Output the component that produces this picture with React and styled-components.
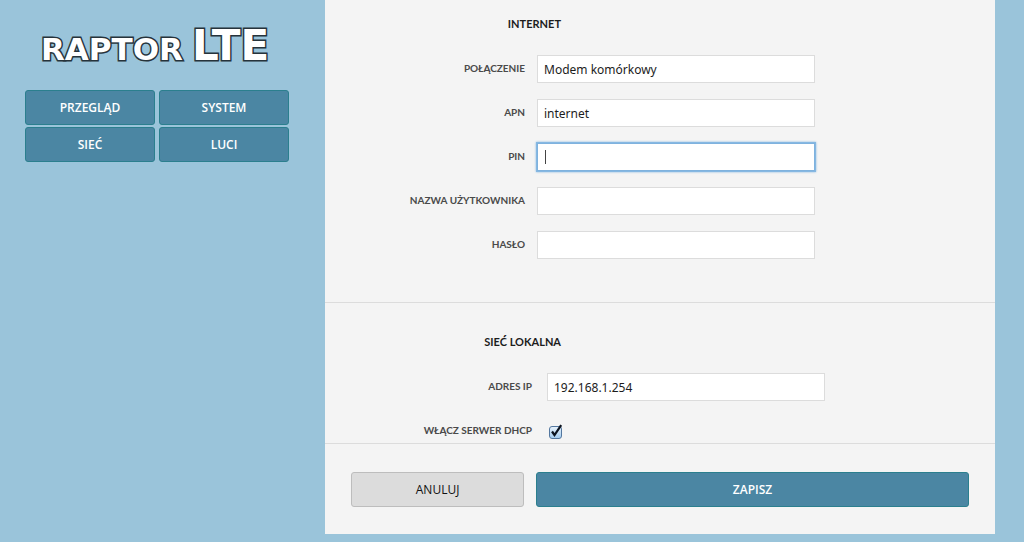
import React, { useState } from "react"
import styled, { createGlobalStyle, css } from "styled-components"

const Colors = {
  sky: "#9ac4da",
  teal: "#4b86a3",
  tealBorder: "#2b7f8e",
  panel: "#f4f4f4",
  line: "#dcdcdc",
  label: "#4a4a4a",
  ink: "#1c1c1c",
}

const GlobalStyle = createGlobalStyle`
  * {
    box-sizing: border-box;
  }

  body {
    margin: 0;
    background: ${Colors.sky};
    color: ${Colors.ink};
    font-family: Lato, "Noto Sans", sans-serif;
  }
`

const Page = styled.div`
  display: grid;
  grid-template-columns: 325px 1fr;
  padding-right: 29px;
`

const Sidebar = styled.aside`
  padding: 20px 36px 0 25px;
`

const Logo = styled.h1`
  display: flex;
  align-items: baseline;
  gap: 9px;
  height: 50px;
  margin: 0 0 20px;
  padding-left: 16px;
  color: #fff;
  font-family: "DejaVu Sans", sans-serif;
  font-size: 31px;
  font-weight: 700;
  line-height: 52px;
  white-space: nowrap;
  paint-order: stroke fill;
  -webkit-text-stroke: 3px #26333b;
`

const LogoLarge = styled.span`
  font-size: 42px;
`

const Nav = styled.nav`
  display: grid;
  grid-template-columns: 1fr 1fr;
  gap: 2px 4px;
`

const Button = styled.button`
  height: 35px;
  padding: 0 10px;
  border: 1px solid ${Colors.tealBorder};
  border-radius: 3px;
  background: ${Colors.teal};
  color: #fff;
  font-family: "Open Sans", "Noto Sans", sans-serif;
  font-size: 12px;
  font-weight: 600;
  cursor: pointer;

  ${props =>
    props.$plain &&
    css`
      border-color: #bdbdbd;
      background: #dcdcdc;
      color: #111;
      font-weight: 400;
    `}
`

const Panel = styled.form`
  background: ${Colors.panel};
`

const Section = styled.section`
  display: flex;
  flex-direction: column;
  gap: 16px;
  padding: ${props => props.$padding};
  border-bottom: 1px solid ${Colors.line};
`

const SectionTitle = styled.h2`
  width: 236px;
  margin: 0 0 6px;
  font-size: 11px;
  font-weight: 700;
  line-height: 18px;
  text-align: right;
`

const Row = styled.div`
  display: grid;
  grid-template-columns: ${props => props.$labelWidth}px minmax(0, 278px);
  column-gap: ${props => props.$gap}px;
`

const Label = styled.label`
  color: ${Colors.label};
  font-size: 10px;
  font-weight: 700;
  line-height: 26px;
  text-align: right;
  white-space: nowrap;
`

const Input = styled.input`
  width: 100%;
  height: 28px;
  padding: 0 6px;
  border: 1px solid ${Colors.line};
  border-radius: 0;
  background: #fff;
  color: ${Colors.ink};
  font-family: "Noto Sans", sans-serif;
  font-size: 12px;

  &:focus {
    outline: none;
    border-color: #7fb2de;
    box-shadow: 0 0 0 1px #86b8e2, 0 0 2px 1px #86b8e2;
  }

  /* steady caret while the field is empty */
  &:focus:placeholder-shown {
    caret-color: transparent;
    background: linear-gradient(#444, #444) 7px center / 1px 14px no-repeat #fff;
  }
`

const CheckWrap = styled.span`
  position: relative;
  width: 14px;
  height: 14px;
  margin: 9px 0 0 2px;
`

const CheckInput = styled.input`
  appearance: none;
  display: block;
  width: 13px;
  height: 13px;
  margin: 0;
  border: 1px solid #53779f;
  border-radius: 3px;
  background: linear-gradient(#e6f1fb, #a5cdf0);
`

const CheckMark = styled.svg`
  position: absolute;
  top: -2px;
  left: 0;
  pointer-events: none;
`

const Actions = styled.div`
  display: grid;
  grid-template-columns: 2fr 5fr;
  gap: 12px;
  padding: 28px 26px 27px;
`

const Field = ({ id, label, value = "", type = "text", labelWidth = 200, gap = 12, autoFocus }) => (
  <Row $labelWidth={labelWidth} $gap={gap}>
    <Label htmlFor={id}>{label}</Label>
    <Input id={id} type={type} defaultValue={value} placeholder=" " autoFocus={autoFocus} />
  </Row>
)

const Checkbox = ({ id }) => {
  const [checked, setChecked] = useState(true)
  return (
    <CheckWrap>
      <CheckInput id={id} type="checkbox" checked={checked} onChange={e => setChecked(e.target.checked)} />
      {checked && (
        <CheckMark width="14" height="15" viewBox="0 0 14 15" aria-hidden="true">
          <path d="M3 7.5 L5.5 11 L12.2 1.2" fill="none" stroke="#0c1420" strokeWidth="2.2" />
        </CheckMark>
      )}
    </CheckWrap>
  )
}

const App = () => {
  return (
    <>
      <GlobalStyle />
      <Page>
        <Sidebar>
          <Logo>
            <span>RAPTOR</span>
            <LogoLarge>LTE</LogoLarge>
          </Logo>
          <Nav>
            <Button type="button">PRZEGLĄD</Button>
            <Button type="button">SYSTEM</Button>
            <Button type="button">SIEĆ</Button>
            <Button type="button">LUCI</Button>
          </Nav>
        </Sidebar>
        <Panel onSubmit={e => e.preventDefault()}>
          <Section $padding="15px 0 43px">
            <SectionTitle>INTERNET</SectionTitle>
            <Field id="connection" label="POŁĄCZENIE" value="Modem komórkowy" />
            <Field id="apn" label="APN" value="internet" />
            <Field id="pin" label="PIN" autoFocus />
            <Field id="user" label="NAZWA UŻYTKOWNIKA" />
            <Field id="password" label="HASŁO" type="password" />
          </Section>
          <Section $padding="30px 0 0">
            <SectionTitle>SIEĆ LOKALNA</SectionTitle>
            <Field id="ip" label="ADRES IP" value="192.168.1.254" labelWidth={207} gap={15} />
            <Row $labelWidth={207} $gap={15}>
              <Label htmlFor="dhcp">WŁĄCZ SERWER DHCP</Label>
              <Checkbox id="dhcp" />
            </Row>
          </Section>
          <Actions>
            <Button type="button" $plain>ANULUJ</Button>
            <Button type="submit">ZAPISZ</Button>
          </Actions>
        </Panel>
      </Page>
    </>
  )
}

export default App
